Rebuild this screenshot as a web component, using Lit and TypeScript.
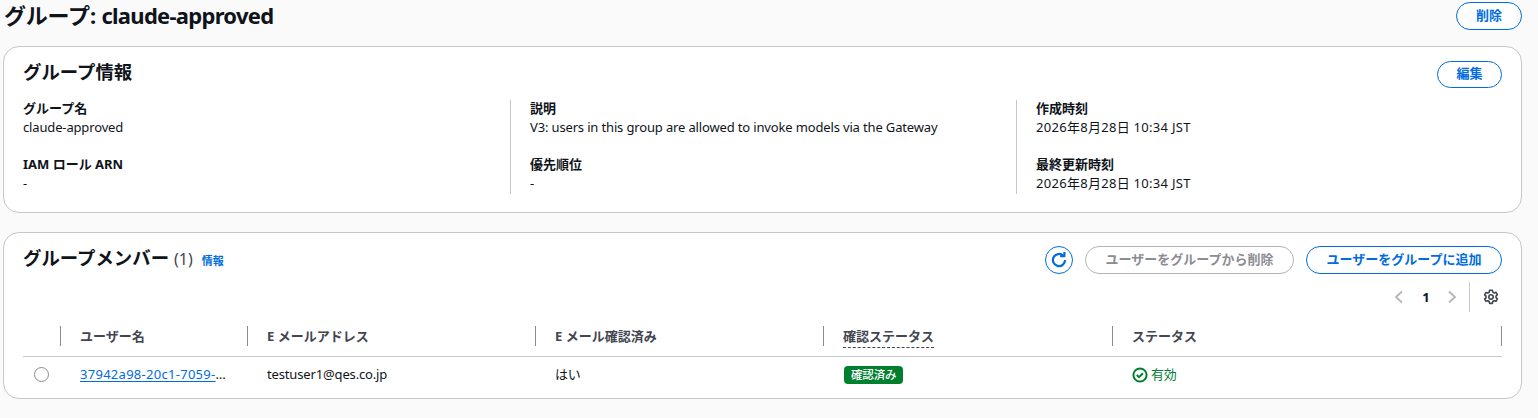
import { LitElement, html, css } from "lit";
import { customElement } from "lit/decorators.js";

@customElement("app-root")
export class AppRoot extends LitElement {
  static styles = css`
    :host { display: block; width: 1538px; height: 418px; overflow: hidden; background: #fafafa; color: #0f141a;
      font-family: "Noto Sans", "Noto Sans CJK JP", sans-serif; font-size: 13px; line-height: 20px; }
    * { box-sizing: border-box; }
    .page { padding: 2px 16px 0 3px; display: flex; flex-direction: column; }
    .head { display: flex; justify-content: space-between; align-items: flex-start; height: 44px; }
    h1 { margin: -2px 0 0 1px; font-size: 22px; line-height: 30px; font-weight: 700; letter-spacing: -0.2px; }
    h1 span { letter-spacing: -0.72px; }
    .btn { display: inline-flex; align-items: center; justify-content: center; height: 28px; padding-bottom: 2px; border: 1.5px solid #006ce0;
      border-radius: 14px; color: #006ce0; font-size: 13px; font-weight: 700; background: #fff; white-space: nowrap; }
    .btn.small { width: 66px; }
    .btn.edit { width: 65px; height: 27px; }
    .btn.off { border-color: #b4b4bb; color: #8c8c94; }
    .card { background: #fff; border: 1px solid #c6c6cd; border-radius: 16px; height: 167px; padding: 13px 19px 0 19px; }
    .card + .card { margin-top: 19px; }
    .cardhead { display: flex; justify-content: space-between; align-items: center; height: 28px; }
    h2 { margin: 0; padding-bottom: 4px; font-size: 18.4px; line-height: 26px; font-weight: 700; }
    .info { display: grid; grid-template-columns: 487px 506px 1fr; margin-top: 12px; height: 94px; }
    .col { display: flex; flex-direction: column; gap: 18px; padding-left: 19px; border-left: 1px solid #c6c6cd; }
    .col:first-child { padding-left: 0; border-left: 0; }
    .label { font-weight: 700; font-size: 13px; line-height: 18px; margin-top: -1px; }
    .value { font-size: 13px; letter-spacing: -0.15px; }
    .value.date { letter-spacing: 0.29px; }
    .pair { height: 38px; }
    .h2line { display: flex; align-items: baseline; }
    .count { font-size: 16px; color: #424650; margin-left: 5px; font-weight: 400; }
    .infolink { font-size: 11px; font-weight: 700; color: #006ce0; margin-left: 9px; }
    .actions { display: flex; align-items: center; }
    .refresh { width: 28px; height: 28px; border-radius: 50%; border: 1.5px solid #006ce0; display: flex; align-items: center;
      justify-content: center; background: #fff; margin-right: 12px; }
    .remove { width: 209px; margin-right: 12px; }
    .add { width: 196px; }
    .pager { display: flex; justify-content: flex-end; align-items: center; height: 30px; margin-top: 8px; }
    .pager .one { font-size: 13px; font-weight: 700; width: 12px; text-align: center; margin: 0 13px 0 14px; }
    .pager .sep { width: 1px; height: 30px; background: #c6c6cd; margin: 0 13px 0 10px; }
    .pager .gap { width: 3px; }
    .thead { display: grid; grid-template-columns: 38px 187px 288px 288px 289px 389px; height: 28px; margin-top: 8px; align-items: start; }
    .th { height: 20px; margin-top: 6px; border-right: 1px solid #8c8c94; padding-left: 19px; font-size: 13px; font-weight: 700;
      color: #424650; line-height: 20px; white-space: nowrap; }
    .th.n { padding-left: 0; }
    .dash { border-bottom: 1px dashed #424650; display: inline-block; line-height: 21px; height: 22px; }
    .line { height: 1px; background: #c6c6cd; margin-top: 8px; }
    .row { display: grid; grid-template-columns: 38px 187px 288px 288px 289px 389px; height: 34px; align-items: center; font-size: 13px; }
    .radio { display: block; width: 15px; height: 15px; border: 1px solid #8c8c94; border-radius: 50%; margin-left: 11px; background: #fff; }
    .cell { padding-left: 19px; white-space: nowrap; letter-spacing: -0.15px; }
    .cell.st { padding-left: 20px; }
    .link { color: #006ce0; text-decoration: underline; text-underline-offset: 2px; display: inline-block; letter-spacing: 0.28px; }
    .badge { display: inline-flex; height: 18px; align-items: center; padding: 0 7px; border-radius: 4px; background: #00802f; color: #fff; font-size: 11.5px; font-weight: 500; }
    .ok { display: flex; align-items: center; gap: 3px; color: #00802f; }
    svg { display: block; }
    .ok svg { margin-top: 1px; }
  `;

  render() {
    return html`
      <div class="page">
        <div class="head">
          <h1>グループ: <span>claude-approved</span></h1>
          <span class="btn small">削除</span>
        </div>
        <section class="card">
          <div class="cardhead"><h2>グループ情報</h2><span class="btn edit">編集</span></div>
          <div class="info">
            <div class="col">
              <div class="pair"><div class="label">グループ名</div><div class="value">claude-approved</div></div>
              <div class="pair"><div class="label">IAM ロール ARN</div><div class="value">-</div></div>
            </div>
            <div class="col">
              <div class="pair"><div class="label">説明</div><div class="value">V3: users in this group are allowed to invoke models via the Gateway</div></div>
              <div class="pair"><div class="label">優先順位</div><div class="value">-</div></div>
            </div>
            <div class="col">
              <div class="pair"><div class="label">作成時刻</div><div class="value date">2026年8月28日 10:34 JST</div></div>
              <div class="pair"><div class="label">最終更新時刻</div><div class="value date">2026年8月28日 10:34 JST</div></div>
            </div>
          </div>
        </section>
        <section class="card">
          <div class="cardhead">
            <div class="h2line"><h2>グループメンバー</h2><span class="count">(1)</span><span class="infolink">情報</span></div>
            <div class="actions">
              <span class="refresh"><svg width="18" height="18" viewBox="0 0 16 16" fill="none" stroke="#006ce0" stroke-width="2"><path d="M13.4 8a5.4 5.4 0 1 1-1.6-3.8"/><path d="M12.8 .8v3.8H9" stroke-linejoin="round"/></svg></span>
              <span class="btn off remove">ユーザーをグループから削除</span>
              <span class="btn add">ユーザーをグループに追加</span>
            </div>
          </div>
          <div class="pager">
            <svg width="14" height="14" viewBox="0 0 14 14" fill="none" stroke="#b4b4bb" stroke-width="1.8"><path d="M10 1.5 4 7l6 5.5"/></svg>
            <span class="one">1</span>
            <svg width="14" height="14" viewBox="0 0 14 14" fill="none" stroke="#b4b4bb" stroke-width="1.8"><path d="m4 1.5 6 5.5-6 5.5"/></svg>
            <span class="sep"></span>
            <svg width="16" height="16" viewBox="0 0 16 16" fill="none" stroke="#424650" stroke-width="1.6" stroke-linejoin="round"><circle cx="8" cy="8" r="2.2"/><path d="M6.6 1.2h2.8l.4 1.9 1.4.8 1.8-.6 1.4 2.4-1.4 1.3v1.6l1.4 1.3-1.4 2.4-1.8-.6-1.4.8-.4 1.9H6.6l-.4-1.9-1.4-.8-1.8.6-1.4-2.4L3 8.8V7.2L1.6 5.9 3 3.5l1.8.6 1.4-.8z"/></svg>
            <span class="gap"></span>
          </div>
          <div class="thead">
            <div class="th n"></div>
            <div class="th">ユーザー名</div>
            <div class="th">E メールアドレス</div>
            <div class="th">E メール確認済み</div>
            <div class="th"><span class="dash">確認ステータス</span></div>
            <div class="th">ステータス</div>
          </div>
          <div class="line"></div>
          <div class="row">
            <div><span class="radio"></span></div>
            <div class="cell"><span class="link">37942a98-20c1-7059-</span>…</div>
            <div class="cell">testuser1@qes.co.jp</div>
            <div class="cell">はい</div>
            <div class="cell st"><span class="badge">確認済み</span></div>
            <div class="cell"><span class="ok"><svg width="16" height="16" viewBox="0 0 16 16" fill="none" stroke="#00802f" stroke-width="2"><circle cx="8" cy="8" r="6.6"/><path d="m4.8 8 2.2 2.2 4-4"/></svg>有効</span></div>
          </div>
        </section>
      </div>
    `;
  }
}
